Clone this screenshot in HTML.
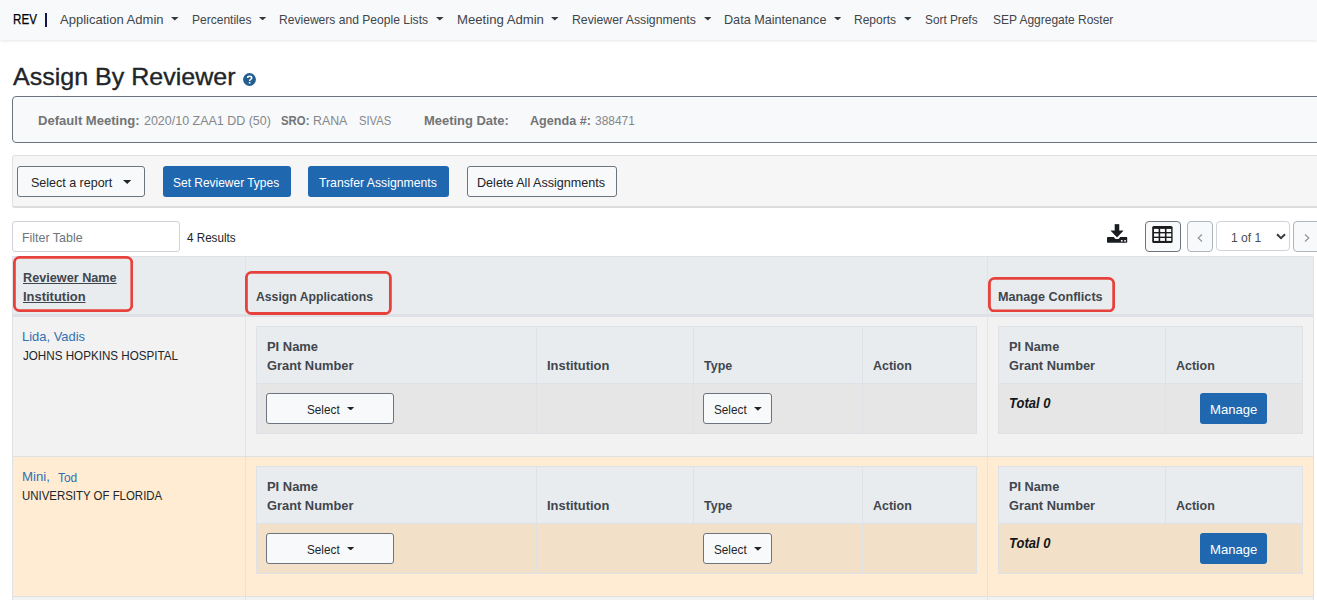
<!DOCTYPE html>
<html><head><meta charset="utf-8"><title>Assign By Reviewer</title>
<style>
*{box-sizing:border-box;margin:0;padding:0}
html,body{width:1317px;height:600px;overflow:hidden;background:#fff;font-family:"Liberation Sans",sans-serif}
body{position:relative}
.a{position:absolute;display:block}
.t{position:absolute;white-space:pre;transform-origin:0 0;font-family:"Liberation Sans",sans-serif}
</style></head><body>
<div class="a" style="left:0px;top:0px;width:1317px;height:40px;background:#f8f9fa;box-shadow:0 1px 3px rgba(0,0,0,.10)"></div>
<div class="a" style="left:45.4px;top:13px;width:1.7px;height:13.6px;background:#15154a"></div>
<svg class="a" style="left:171.2px;top:17.0px" width="7.6" height="3.57" viewBox="0 0 7.6 3.57"><path d="M0 0H7.6L3.8 3.57Z" fill="#343a40"/></svg>
<svg class="a" style="left:259.0px;top:17.0px" width="7.2" height="3.38" viewBox="0 0 7.2 3.38"><path d="M0 0H7.2L3.6 3.38Z" fill="#343a40"/></svg>
<svg class="a" style="left:436.20000000000005px;top:17.0px" width="7.6" height="3.57" viewBox="0 0 7.6 3.57"><path d="M0 0H7.6L3.8 3.57Z" fill="#343a40"/></svg>
<svg class="a" style="left:551.2px;top:17.0px" width="7.6" height="3.57" viewBox="0 0 7.6 3.57"><path d="M0 0H7.6L3.8 3.57Z" fill="#343a40"/></svg>
<svg class="a" style="left:703.6px;top:17.0px" width="7.6" height="3.57" viewBox="0 0 7.6 3.57"><path d="M0 0H7.6L3.8 3.57Z" fill="#343a40"/></svg>
<svg class="a" style="left:833.6px;top:17.0px" width="7.4" height="3.48" viewBox="0 0 7.4 3.48"><path d="M0 0H7.4L3.7 3.48Z" fill="#343a40"/></svg>
<svg class="a" style="left:904.2px;top:17.0px" width="7.6" height="3.57" viewBox="0 0 7.6 3.57"><path d="M0 0H7.6L3.8 3.57Z" fill="#343a40"/></svg>
<svg class="a" style="left:242.750px;top:73px" width="13" height="13" viewBox="0 0 13 13"><circle cx="6.500" cy="6.500" r="6.400" fill="#245d8f"/><path d="M4.600 4.900C4.600 2.700 8.700 2.700 8.700 4.900C8.700 6.300 6.600 6.300 6.600 8.000" fill="none" stroke="#fff" stroke-width="1.500"/><rect x="5.800" y="9.000" width="1.600" height="1.500" fill="#fff"/></svg>
<div class="a" style="left:12px;top:96px;width:1330px;height:47px;border:1px solid #6c757d;border-radius:4px;background:#f8f9fa"></div>
<div class="a" style="left:12px;top:155px;width:1330px;height:53px;border:1px solid #e0e0e0;border-bottom:2px solid #dcdcdc;border-radius:3px;background:#f6f6f6"></div>
<div class="a" style="left:17px;top:166px;width:128px;height:31px;border:1px solid #6c757d;border-radius:3px;background:#f8f9fa"></div>
<svg class="a" style="left:123.0px;top:180.0px" width="8.4" height="3.95" viewBox="0 0 8.4 3.95"><path d="M0 0H8.4L4.2 3.95Z" fill="#212529"/></svg>
<div class="a" style="left:163px;top:166px;width:128px;height:31px;border-radius:3px;background:#1f68b0"></div>
<div class="a" style="left:308px;top:166px;width:141px;height:31px;border-radius:3px;background:#1f68b0"></div>
<div class="a" style="left:467px;top:166px;width:150px;height:31px;border:1px solid #6c757d;border-radius:3px;background:#f8f9fa"></div>
<div class="a" style="left:12px;top:221px;width:168px;height:31px;border:1px solid #ced4da;border-radius:3px;background:#fff"></div>
<svg class="a" style="left:1106px;top:224px" width="22" height="19" viewBox="1106 224 22 19"><rect x="1107" y="237" width="20.200" height="5.700" rx="0.700" fill="#1a1d20"/><path d="M1113.500 236.800L1115.500 239.100H1118.600L1120.500 236.800z" fill="#fff"/><path d="M1114.900 224.300h4.150v6.500h4.150l-6.200 6.400l-6.100-6.400h4.000z" fill="#1a1d20" stroke="#1a1d20" stroke-width="0.400" stroke-linejoin="round"/><rect x="1120.900" y="240" width="1.700" height="1.600" fill="#eef5ff"/><rect x="1124.200" y="240" width="1.700" height="1.600" fill="#eef5ff"/></svg>
<div class="a" style="left:1145px;top:221px;width:36px;height:31px;border:1px solid #6c757d;border-radius:4px;background:#f8f9fa"></div>
<svg class="a" style="left:1152px;top:225px" width="21" height="19" viewBox="1152 225 21 19"><rect x="1152.200" y="225.900" width="20.400" height="17.100" rx="1.600" fill="#1a1d20"/><rect x="1154.0" y="228.9" width="4.60" height="3.10" fill="#fff"/><rect x="1154.0" y="233.4" width="4.60" height="3.20" fill="#fff"/><rect x="1154.0" y="238.0" width="4.60" height="2.90" fill="#fff"/><rect x="1160.2" y="228.9" width="4.70" height="3.10" fill="#fff"/><rect x="1160.2" y="233.4" width="4.70" height="3.20" fill="#fff"/><rect x="1160.2" y="238.0" width="4.70" height="2.90" fill="#fff"/><rect x="1166.5" y="228.9" width="4.70" height="3.10" fill="#fff"/><rect x="1166.5" y="233.4" width="4.70" height="3.20" fill="#fff"/><rect x="1166.5" y="238.0" width="4.70" height="2.90" fill="#fff"/></svg>
<div class="a" style="left:1187px;top:221px;width:26px;height:31px;border:1px solid #adb5bd;border-radius:4px;background:#f8f9fa"></div>
<svg class="a" style="left:1197px;top:234px" width="6" height="8" viewBox="0 0 6 8"><path d="M5 0.500L1.200 4L5 7.500" stroke="#8a9199" stroke-width="1.100" fill="none"/></svg>
<div class="a" style="left:1216px;top:221px;width:74px;height:30px;border:1px solid #ced4da;border-radius:4px;background:#fff"></div>
<svg class="a" style="left:1275.500px;top:233px" width="10" height="7" viewBox="0 0 10 7"><path d="M1 1.200L5 5.200L9 1.200" stroke="#343a40" stroke-width="2" fill="none"/></svg>
<div class="a" style="left:1293px;top:221px;width:30px;height:31px;border:1px solid #adb5bd;border-radius:4px;background:#f8f9fa"></div>
<svg class="a" style="left:1303.500px;top:234px" width="6" height="8" viewBox="0 0 6 8"><path d="M1 0.500L4.800 4L1 7.500" stroke="#8a9199" stroke-width="1.100" fill="none"/></svg>
<div class="a" style="left:12px;top:256px;width:1302px;height:344px;background:#dee2e6"></div>
<div class="a" style="left:13px;top:257.4px;width:1300px;height:57.1px;background:#e9ecef"></div>
<div class="a" style="left:13px;top:314.5px;width:1300px;height:2.5px;background:#dee2e6"></div>
<div class="a" style="left:245px;top:257px;width:1px;height:60px;background:#dfe3e7"></div>
<div class="a" style="left:987px;top:257px;width:1px;height:60px;background:#dfe3e7"></div>
<svg class="a" style="left:12.9px;top:255.8px" width="120.2" height="56" viewBox="0 0 120.2 56"><rect x="1.4" y="1.4" width="117.4" height="53.2" rx="5.1" fill="none" stroke="#e7413c" stroke-width="2.8"/></svg>
<svg class="a" style="left:245.1px;top:271px" width="146.8" height="43.9" viewBox="0 0 146.8 43.9"><rect x="1.4" y="1.4" width="144.0" height="41.1" rx="5.1" fill="none" stroke="#e7413c" stroke-width="2.8"/></svg>
<svg class="a" style="left:987.9px;top:276.7px" width="127.1" height="35.4" viewBox="0 0 127.1 35.4"><rect x="1.4" y="1.4" width="124.3" height="32.6" rx="5.1" fill="none" stroke="#e7413c" stroke-width="2.8"/></svg>
<div class="a" style="left:13px;top:317px;width:1300px;height:139px;background:#f2f2f2"></div>
<div class="a" style="left:245px;top:317px;width:1px;height:139px;background:#dee2e6;opacity:.8"></div>
<div class="a" style="left:987px;top:317px;width:1px;height:139px;background:#dee2e6;opacity:.8"></div>
<div class="a" style="left:256px;top:326px;width:721px;height:107.5px;background:#dee2e6"></div>
<div class="a" style="left:257px;top:327px;width:719px;height:56px;background:#e9ecef"></div>
<div class="a" style="left:257px;top:384px;width:719px;height:48.5px;background:#e6e6e6"></div>
<div class="a" style="left:536px;top:327px;width:1px;height:105.5px;background:#dee2e6"></div>
<div class="a" style="left:693px;top:327px;width:1px;height:105.5px;background:#dee2e6"></div>
<div class="a" style="left:862px;top:327px;width:1px;height:105.5px;background:#dee2e6"></div>
<div class="a" style="left:998px;top:326px;width:305px;height:107.5px;background:#dee2e6"></div>
<div class="a" style="left:999px;top:327px;width:303px;height:56px;background:#e9ecef"></div>
<div class="a" style="left:999px;top:384px;width:303px;height:48.5px;background:#e6e6e6"></div>
<div class="a" style="left:1165px;top:327px;width:1px;height:105.5px;background:#dee2e6"></div>
<div class="a" style="left:266px;top:393px;width:128px;height:31px;border:1px solid #6c757d;border-radius:3px;background:#f8f9fa"></div>
<svg class="a" style="left:347.0px;top:407.0px" width="7.4" height="3.48" viewBox="0 0 7.4 3.48"><path d="M0 0H7.4L3.7 3.48Z" fill="#212529"/></svg>
<div class="a" style="left:703.4px;top:393px;width:68.6px;height:31px;border:1px solid #6c757d;border-radius:3px;background:#f8f9fa"></div>
<svg class="a" style="left:754.2px;top:407.0px" width="7.8" height="3.67" viewBox="0 0 7.8 3.67"><path d="M0 0H7.8L3.9 3.67Z" fill="#212529"/></svg>
<div class="a" style="left:1200px;top:393px;width:67px;height:31px;border-radius:3px;background:#1f68b0"></div>
<div class="a" style="left:13px;top:457px;width:1300px;height:139px;background:#ffecd3"></div>
<div class="a" style="left:245px;top:457px;width:1px;height:139px;background:#dee2e6;opacity:.8"></div>
<div class="a" style="left:987px;top:457px;width:1px;height:139px;background:#dee2e6;opacity:.8"></div>
<div class="a" style="left:256px;top:466px;width:721px;height:107.5px;background:#dee2e6"></div>
<div class="a" style="left:257px;top:467px;width:719px;height:56px;background:#e9ecef"></div>
<div class="a" style="left:257px;top:524px;width:719px;height:48.5px;background:#f2e1c8"></div>
<div class="a" style="left:536px;top:467px;width:1px;height:105.5px;background:#dee2e6"></div>
<div class="a" style="left:693px;top:467px;width:1px;height:105.5px;background:#dee2e6"></div>
<div class="a" style="left:862px;top:467px;width:1px;height:105.5px;background:#dee2e6"></div>
<div class="a" style="left:998px;top:466px;width:305px;height:107.5px;background:#dee2e6"></div>
<div class="a" style="left:999px;top:467px;width:303px;height:56px;background:#e9ecef"></div>
<div class="a" style="left:999px;top:524px;width:303px;height:48.5px;background:#f2e1c8"></div>
<div class="a" style="left:1165px;top:467px;width:1px;height:105.5px;background:#dee2e6"></div>
<div class="a" style="left:266px;top:533px;width:128px;height:31px;border:1px solid #6c757d;border-radius:3px;background:#f8f9fa"></div>
<svg class="a" style="left:347.0px;top:547.0px" width="7.4" height="3.48" viewBox="0 0 7.4 3.48"><path d="M0 0H7.4L3.7 3.48Z" fill="#212529"/></svg>
<div class="a" style="left:703.4px;top:533px;width:68.6px;height:31px;border:1px solid #6c757d;border-radius:3px;background:#f8f9fa"></div>
<svg class="a" style="left:754.2px;top:547.0px" width="7.8" height="3.67" viewBox="0 0 7.8 3.67"><path d="M0 0H7.8L3.9 3.67Z" fill="#212529"/></svg>
<div class="a" style="left:1200px;top:533px;width:67px;height:31px;border-radius:3px;background:#1f68b0"></div>
<div class="a" style="left:13px;top:597px;width:1300px;height:3px;background:#f2f2f2"></div>
<div class="a" style="left:245px;top:597px;width:1px;height:3px;background:#dee2e6"></div>
<div class="a" style="left:987px;top:597px;width:1px;height:3px;background:#dee2e6"></div>
<div class="t" style="left:12.77px;top:10.00px;font-size:14px;line-height:18px;color:#000;transform:scaleX(0.8296);-webkit-text-stroke:0.25px #000">REV</div>
<div class="t" style="left:60.40px;top:11.00px;font-size:13px;line-height:17px;color:#40454a;transform:scaleX(1.0017);">Application Admin</div>
<div class="t" style="left:191.68px;top:11.00px;font-size:13px;line-height:17px;color:#40454a;transform:scaleX(0.9246);">Percentiles</div>
<div class="t" style="left:279.47px;top:11.00px;font-size:13px;line-height:17px;color:#40454a;transform:scaleX(0.9292);">Reviewers and People Lists</div>
<div class="t" style="left:456.59px;top:11.00px;font-size:13px;line-height:17px;color:#40454a;transform:scaleX(1.0108);">Meeting Admin</div>
<div class="t" style="left:571.66px;top:11.00px;font-size:13px;line-height:17px;color:#40454a;transform:scaleX(0.9414);">Reviewer Assignments</div>
<div class="t" style="left:724.43px;top:11.00px;font-size:13px;line-height:17px;color:#40454a;transform:scaleX(0.9705);">Data Maintenance</div>
<div class="t" style="left:854.48px;top:11.00px;font-size:13px;line-height:17px;color:#40454a;transform:scaleX(0.9241);">Reports</div>
<div class="t" style="left:925.40px;top:11.00px;font-size:13px;line-height:17px;color:#40454a;transform:scaleX(0.9092);">Sort Prefs</div>
<div class="t" style="left:992.60px;top:11.00px;font-size:13px;line-height:17px;color:#40454a;transform:scaleX(0.9214);">SEP Aggregate Roster</div>
<div class="t" style="left:13.20px;top:63.25px;font-size:24.5px;line-height:28.5px;color:#212529;transform:scaleX(1.0216);-webkit-text-stroke:0.35px #212529">Assign By Reviewer</div>
<div class="t" style="left:38.40px;top:111.75px;font-size:13.5px;line-height:17.5px;color:#727476;transform:scaleX(0.9665);font-weight:bold;">Default Meeting:</div>
<div class="t" style="left:143.60px;top:111.75px;font-size:13.5px;line-height:17.5px;color:#84878a;transform:scaleX(0.9238);">2020/10 ZAA1 DD (50)</div>
<div class="t" style="left:281.40px;top:111.75px;font-size:13.5px;line-height:17.5px;color:#727476;transform:scaleX(0.8420);font-weight:bold;">SRO:</div>
<div class="t" style="left:312.69px;top:111.75px;font-size:13.5px;line-height:17.5px;color:#84878a;transform:scaleX(0.9150);">RANA</div>
<div class="t" style="left:359.40px;top:111.75px;font-size:13.5px;line-height:17.5px;color:#84878a;transform:scaleX(0.8307);">SIVAS</div>
<div class="t" style="left:423.60px;top:111.75px;font-size:13.5px;line-height:17.5px;color:#727476;transform:scaleX(0.9590);font-weight:bold;">Meeting Date:</div>
<div class="t" style="left:530.00px;top:111.75px;font-size:13.5px;line-height:17.5px;color:#727476;transform:scaleX(0.9326);font-weight:bold;">Agenda #:</div>
<div class="t" style="left:595.00px;top:111.75px;font-size:13.5px;line-height:17.5px;color:#84878a;transform:scaleX(0.8846);">388471</div>
<div class="t" style="left:31.40px;top:174.00px;font-size:13px;line-height:17px;color:#212529;transform:scaleX(0.9608);">Select a report</div>
<div class="t" style="left:173.20px;top:174.00px;font-size:13px;line-height:17px;color:#fff;transform:scaleX(0.9199);">Set Reviewer Types</div>
<div class="t" style="left:319.40px;top:174.00px;font-size:13px;line-height:17px;color:#fff;transform:scaleX(0.9411);">Transfer Assignments</div>
<div class="t" style="left:477.03px;top:174.00px;font-size:13px;line-height:17px;color:#212529;transform:scaleX(0.9687);">Delete All Assignments</div>
<div class="t" style="left:22.04px;top:229.00px;font-size:13px;line-height:17px;color:#6c757d;transform:scaleX(0.9559);">Filter Table</div>
<div class="t" style="left:187.00px;top:229.00px;font-size:13px;line-height:17px;color:#212529;transform:scaleX(0.8960);">4 Results</div>
<div class="t" style="left:1230.80px;top:228.50px;font-size:13px;line-height:17px;color:#495057;transform:scaleX(0.9289);">1 of 1</div>
<div class="t" style="left:23.00px;top:269.00px;font-size:13px;line-height:17px;color:#40464d;transform:scaleX(0.9741);font-weight:bold;text-decoration:underline;text-underline-offset:1px">Reviewer Name</div>
<div class="t" style="left:23.00px;top:287.60px;font-size:13px;line-height:17px;color:#40464d;transform:scaleX(0.9956);font-weight:bold;text-decoration:underline;text-underline-offset:1px">Institution</div>
<div class="t" style="left:256.40px;top:287.60px;font-size:13px;line-height:17px;color:#40464d;transform:scaleX(0.9396);font-weight:bold;">Assign Applications</div>
<div class="t" style="left:998.00px;top:287.60px;font-size:13px;line-height:17px;color:#40464d;transform:scaleX(0.9721);font-weight:bold;">Manage Conflicts</div>
<div class="t" style="left:22.39px;top:467.60px;font-size:13px;line-height:17px;color:#3071b2;transform:scaleX(1.0141);">Mini,</div>
<div class="t" style="left:57.60px;top:468.60px;font-size:13px;line-height:17px;color:#3071b2;transform:scaleX(0.9165);">Tod</div>
<div class="t" style="left:22.00px;top:328.00px;font-size:13px;line-height:17px;color:#3071b2;transform:scaleX(0.9959);">Lida, Vadis</div>
<div class="t" style="left:23.20px;top:346.60px;font-size:13px;line-height:17px;color:#212529;transform:scaleX(0.8953);">JOHNS HOPKINS HOSPITAL</div>
<div class="t" style="left:266.60px;top:337.60px;font-size:13px;line-height:17px;color:#40464d;transform:scaleX(0.9947);font-weight:bold;">PI Name</div>
<div class="t" style="left:266.60px;top:356.60px;font-size:13px;line-height:17px;color:#40464d;transform:scaleX(0.9892);font-weight:bold;">Grant Number</div>
<div class="t" style="left:546.60px;top:356.60px;font-size:13px;line-height:17px;color:#40464d;transform:scaleX(0.9924);font-weight:bold;">Institution</div>
<div class="t" style="left:704.00px;top:356.60px;font-size:13px;line-height:17px;color:#40464d;transform:scaleX(0.9606);font-weight:bold;">Type</div>
<div class="t" style="left:872.60px;top:356.60px;font-size:13px;line-height:17px;color:#40464d;transform:scaleX(0.9580);font-weight:bold;">Action</div>
<div class="t" style="left:306.60px;top:401.00px;font-size:13px;line-height:17px;color:#212529;transform:scaleX(0.9036);">Select</div>
<div class="t" style="left:714.00px;top:401.00px;font-size:13px;line-height:17px;color:#212529;transform:scaleX(0.9036);">Select</div>
<div class="t" style="left:1009.00px;top:337.60px;font-size:13px;line-height:17px;color:#40464d;transform:scaleX(0.9790);font-weight:bold;">PI Name</div>
<div class="t" style="left:1009.00px;top:356.60px;font-size:13px;line-height:17px;color:#40464d;transform:scaleX(0.9846);font-weight:bold;">Grant Number</div>
<div class="t" style="left:1175.60px;top:356.60px;font-size:13px;line-height:17px;color:#40464d;transform:scaleX(0.9580);font-weight:bold;">Action</div>
<div class="t" style="left:1009.00px;top:393.60px;font-size:14px;line-height:18px;color:#15171a;transform:scaleX(0.9283);font-weight:bold;font-style:italic;">Total 0</div>
<div class="t" style="left:1209.99px;top:401.00px;font-size:13px;line-height:17px;color:#fff;transform:scaleX(1.0055);">Manage</div>
<div class="t" style="left:22.32px;top:486.60px;font-size:13px;line-height:17px;color:#212529;transform:scaleX(0.8795);">UNIVERSITY OF FLORIDA</div>
<div class="t" style="left:266.60px;top:477.60px;font-size:13px;line-height:17px;color:#40464d;transform:scaleX(0.9947);font-weight:bold;">PI Name</div>
<div class="t" style="left:266.60px;top:496.60px;font-size:13px;line-height:17px;color:#40464d;transform:scaleX(0.9892);font-weight:bold;">Grant Number</div>
<div class="t" style="left:546.60px;top:496.60px;font-size:13px;line-height:17px;color:#40464d;transform:scaleX(0.9924);font-weight:bold;">Institution</div>
<div class="t" style="left:704.00px;top:496.60px;font-size:13px;line-height:17px;color:#40464d;transform:scaleX(0.9606);font-weight:bold;">Type</div>
<div class="t" style="left:872.60px;top:496.60px;font-size:13px;line-height:17px;color:#40464d;transform:scaleX(0.9580);font-weight:bold;">Action</div>
<div class="t" style="left:306.60px;top:541.00px;font-size:13px;line-height:17px;color:#212529;transform:scaleX(0.9036);">Select</div>
<div class="t" style="left:714.00px;top:541.00px;font-size:13px;line-height:17px;color:#212529;transform:scaleX(0.9036);">Select</div>
<div class="t" style="left:1009.00px;top:477.60px;font-size:13px;line-height:17px;color:#40464d;transform:scaleX(0.9790);font-weight:bold;">PI Name</div>
<div class="t" style="left:1009.00px;top:496.60px;font-size:13px;line-height:17px;color:#40464d;transform:scaleX(0.9846);font-weight:bold;">Grant Number</div>
<div class="t" style="left:1175.60px;top:496.60px;font-size:13px;line-height:17px;color:#40464d;transform:scaleX(0.9580);font-weight:bold;">Action</div>
<div class="t" style="left:1009.00px;top:533.60px;font-size:14px;line-height:18px;color:#15171a;transform:scaleX(0.9283);font-weight:bold;font-style:italic;">Total 0</div>
<div class="t" style="left:1209.99px;top:541.00px;font-size:13px;line-height:17px;color:#fff;transform:scaleX(1.0055);">Manage</div>
</body></html>
